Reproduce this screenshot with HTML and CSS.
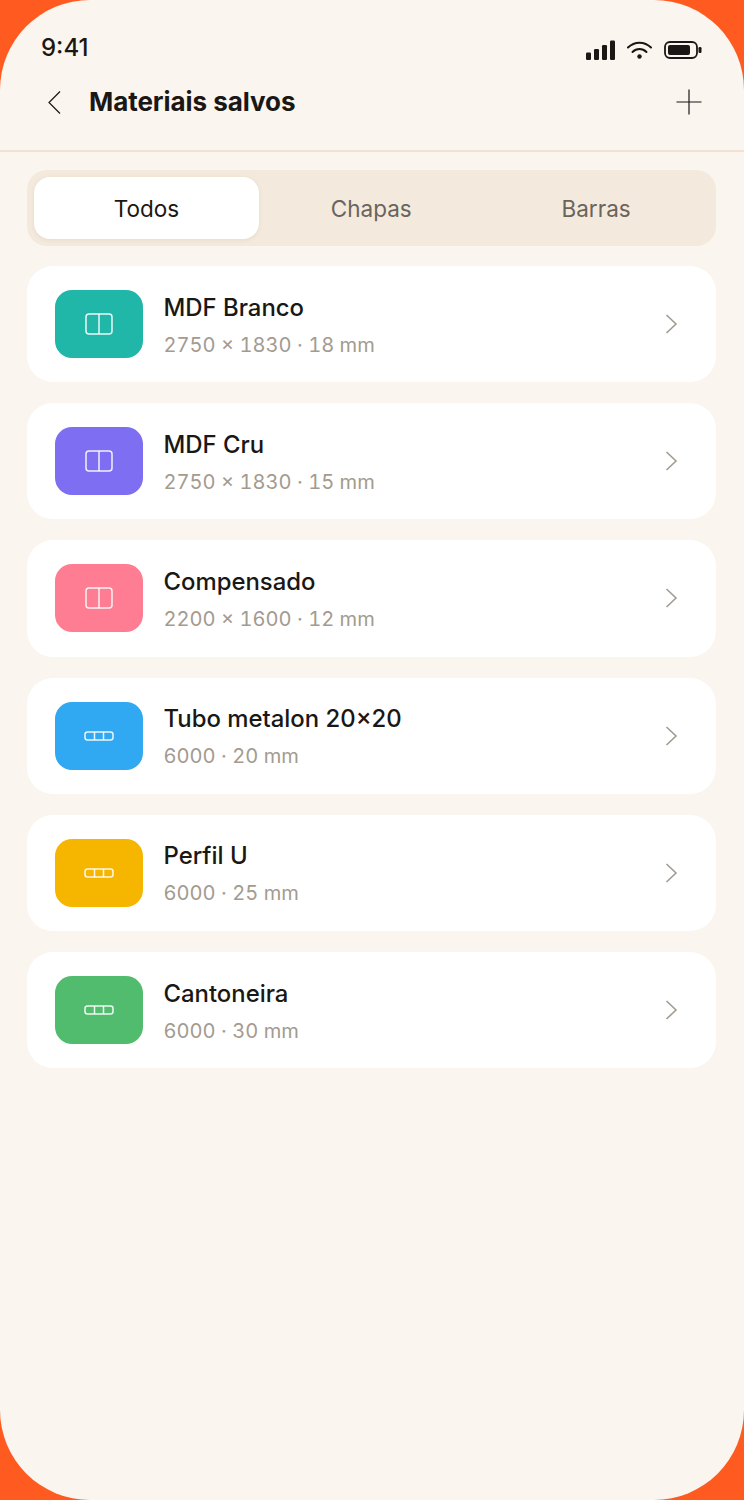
FILE: index.html
```html
<!DOCTYPE html>
<html lang="pt">

<head>
    <meta charset="utf-8">
    <title>Materiais salvos</title>
    <link rel="stylesheet" href="styles.css">
</head>

<body>
  <div class="screen">
    <div class="status">
      <span class="time">9:41</span>
      <div class="status-icons">
        <svg width="29" height="20" viewBox="0 0 29 20"><g fill="#1a1714"><rect x="0" y="12.500" width="5" height="7.500" rx="1.200"/><rect x="8" y="9" width="5" height="11" rx="1.200"/><rect x="16" y="5" width="5" height="15" rx="1.200"/><rect x="24" y="0.500" width="5" height="19.500" rx="1.200"/></g></svg>
        <svg width="25" height="18" viewBox="0 0 25 18"><g fill="none" stroke="#1a1714" stroke-width="2" stroke-linecap="round"><path d="M1 6.500C7.500 0 17.500 0 24 6.500"/><path d="M5.500 11C9.500 7 15.500 7 19.500 11"/></g><circle cx="12.500" cy="15.500" r="2.200" fill="#1a1714"/></svg>
        <svg width="38" height="18" viewBox="0 0 38 18"><rect x="1" y="1" width="32" height="16" rx="5" fill="none" stroke="#1a1714" stroke-width="1.800"/><rect x="4" y="4" width="22" height="10" rx="2" fill="#1a1714"/><rect x="34.500" y="6" width="3" height="6" rx="1.200" fill="#1a1714"/></svg>
      </div>
    </div>

    <div class="header">
      <svg class="back" width="13" height="23" viewBox="0 0 13 23"><path d="M12 0.500L1 11.500L12 22.500" fill="none" stroke="#1a1714" stroke-width="1.200"/></svg>
      <h1 class="title">Materiais salvos</h1>
      <svg class="add" width="26" height="26" viewBox="0 0 26 26"><path d="M13 0.500V25.500M0.500 13H25.500" fill="none" stroke="#1a1714" stroke-width="1.200"/></svg>
    </div>

    <div class="tabs">
      <div class="tab active">Todos</div>
      <div class="tab">Chapas</div>
      <div class="tab">Barras</div>
    </div>

    <div class="list">
      <div class="card">
        <div class="thumb teal">
          <svg width="28" height="22" viewBox="0 0 28 22"><rect x="1" y="1" width="26" height="20" rx="3" class="ico"/><path d="M14 1V21" class="ico"/></svg>
        </div>
        <div class="info">
          <div class="name">MDF Branco</div>
          <div class="meta">2750 × 1830 · 18 mm</div>
        </div>
        <svg class="chev" width="13" height="20" viewBox="0 0 13 20"><path d="M1.500 1L11 10L1.500 19" class="chev-line"/></svg>
      </div>
      <div class="card">
        <div class="thumb violet">
          <svg width="28" height="22" viewBox="0 0 28 22"><rect x="1" y="1" width="26" height="20" rx="3" class="ico"/><path d="M14 1V21" class="ico"/></svg>
        </div>
        <div class="info">
          <div class="name">MDF Cru</div>
          <div class="meta">2750 × 1830 · 15 mm</div>
        </div>
        <svg class="chev" width="13" height="20" viewBox="0 0 13 20"><path d="M1.500 1L11 10L1.500 19" class="chev-line"/></svg>
      </div>
      <div class="card">
        <div class="thumb pink">
          <svg width="28" height="22" viewBox="0 0 28 22"><rect x="1" y="1" width="26" height="20" rx="3" class="ico"/><path d="M14 1V21" class="ico"/></svg>
        </div>
        <div class="info">
          <div class="name">Compensado</div>
          <div class="meta">2200 × 1600 · 12 mm</div>
        </div>
        <svg class="chev" width="13" height="20" viewBox="0 0 13 20"><path d="M1.500 1L11 10L1.500 19" class="chev-line"/></svg>
      </div>
      <div class="card">
        <div class="thumb blue">
          <svg width="30" height="10" viewBox="0 0 30 10"><rect x="1" y="1" width="28" height="8" rx="2.500" class="ico"/><path d="M10.500 1V9M19.500 1V9" class="ico"/></svg>
        </div>
        <div class="info">
          <div class="name">Tubo metalon 20×20</div>
          <div class="meta">6000 · 20 mm</div>
        </div>
        <svg class="chev" width="13" height="20" viewBox="0 0 13 20"><path d="M1.500 1L11 10L1.500 19" class="chev-line"/></svg>
      </div>
      <div class="card">
        <div class="thumb amber">
          <svg width="30" height="10" viewBox="0 0 30 10"><rect x="1" y="1" width="28" height="8" rx="2.500" class="ico"/><path d="M10.500 1V9M19.500 1V9" class="ico"/></svg>
        </div>
        <div class="info">
          <div class="name">Perfil U</div>
          <div class="meta">6000 · 25 mm</div>
        </div>
        <svg class="chev" width="13" height="20" viewBox="0 0 13 20"><path d="M1.500 1L11 10L1.500 19" class="chev-line"/></svg>
      </div>
      <div class="card">
        <div class="thumb green">
          <svg width="30" height="10" viewBox="0 0 30 10"><rect x="1" y="1" width="28" height="8" rx="2.500" class="ico"/><path d="M10.500 1V9M19.500 1V9" class="ico"/></svg>
        </div>
        <div class="info">
          <div class="name">Cantoneira</div>
          <div class="meta">6000 · 30 mm</div>
        </div>
        <svg class="chev" width="13" height="20" viewBox="0 0 13 20"><path d="M1.500 1L11 10L1.500 19" class="chev-line"/></svg>
      </div>
    </div>
  </div>
</body>
</html>
```

FILE: styles.css
```css
html, body {
  margin: 0;
  padding: 0;
  background-color: #ff5a1f;
}

.screen {
  width: 743.500px;
  height: 1500px;
  border-radius: 90px;
  background-color: #faf5ef;
  overflow: hidden;
  font-family: "Inter", "Liberation Sans", sans-serif;
  color: #1a1714;
}

.status {
  display: flex;
  justify-content: space-between;
  align-items: center;
  padding: 32px 42px 0 41px;
  height: 30px;
}

.time {
  font-size: 24px;
  font-weight: 500;
}

.status-icons {
  display: flex;
  align-items: center;
  gap: 12px;
  padding-top: 5px;
}

.header {
  display: flex;
  align-items: center;
  height: 80px;
  padding: 0 42px 8px 48px;
  border-bottom: 2px solid #f2e2d4;
}

.back {
  margin-right: 28px;
}

.title {
  flex: 1;
  margin: 0;
  padding-bottom: 2px;
  font-size: 26px;
  font-weight: 700;
  letter-spacing: -0.06px;
}

.tabs {
  display: flex;
  margin: 18px 28px 0 27px;
  padding: 7px;
  height: 62px;
  border-radius: 20px;
  background-color: #f3eadd;
}

.tab {
  flex: 1;
  display: flex;
  align-items: center;
  justify-content: center;
  border-radius: 16px;
  font-size: 22.500px;
  color: #6b645c;
}

.tab.active {
  background-color: #fff;
  color: #1a1714;
  box-shadow: 0 1px 4px rgba(120, 90, 50, 0.1);
}

.list {
  display: flex;
  flex-direction: column;
  gap: 21px;
  margin: 20px 28px 0 27px;
}

.card {
  display: flex;
  align-items: center;
  height: 116.200px;
  padding: 0 37.500px 0 27.500px;
  border-radius: 26px;
  background-color: #fff;
}

.thumb {
  display: flex;
  align-items: center;
  justify-content: center;
  width: 88px;
  height: 68px;
  border-radius: 17px;
  flex-shrink: 0;
}

.teal { background-color: #20b6a8; }
.violet { background-color: #7e6ef2; }
.pink { background-color: #ff7d92; }
.blue { background-color: #30a8f2; }
.amber { background-color: #f6b600; }
.green { background-color: #52bc6e; }

.ico {
  fill: none;
  stroke: #fff;
  stroke-width: 1.500;
  opacity: 0.9;
}

.info {
  flex: 1;
  margin-left: 21px;
  padding-top: 2px;
}

.name {
  font-size: 23.900px;
  font-weight: 450;
  line-height: 30px;
}

.meta {
  margin-top: 9px;
  font-size: 20.100px;
  font-variant-numeric: tabular-nums;
  line-height: 26px;
  color: #a39b90;
}

.chev-line {
  fill: none;
  stroke: #a39b90;
  stroke-width: 1.600;
}
```
